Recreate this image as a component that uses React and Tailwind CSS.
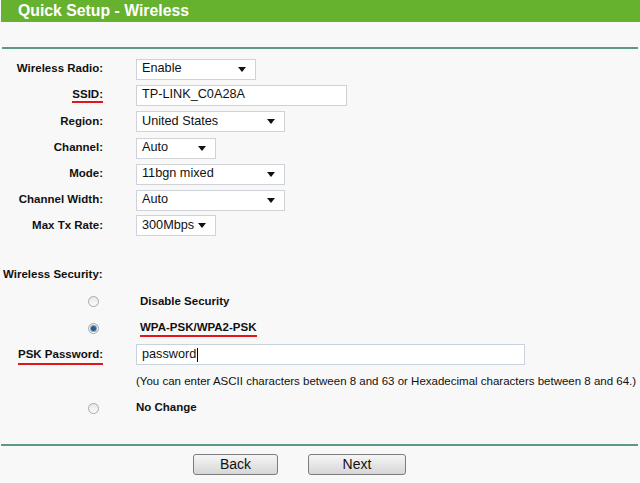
import React from "react";

function Arrow() {
  return (
    <svg width="8" height="5" viewBox="0 0 8 5" className="shrink-0">
      <path d="M0 0 L8 0 L4 5 Z" fill="#111" />
    </svg>
  );
}

function Select({ value, width }) {
  return (
    <div
      className="flex h-[21px] items-center justify-between border border-[#cfd3d8] bg-white pl-[5px] pr-[9px] text-[12.7px] text-[#111]"
      style={{ width }}
    >
      <span>{value}</span>
      <Arrow />
    </div>
  );
}

function TextBox({ value, width, caret }) {
  return (
    <div
      className="flex h-[21px] items-center border border-[#c9d3de] bg-white pl-[5px] text-[12.7px] text-[#111]"
      style={{ width }}
    >
      <span>{value}</span>
      {caret && <span className="ml-[1px] inline-block h-[14px] w-px bg-black" />}
    </div>
  );
}

function Radio({ checked }) {
  return (
    <div className="flex h-[11px] w-[11px] items-center justify-center rounded-full border border-[#a8a8a8] bg-gradient-to-b from-[#e8e8e8] to-[#fbfbfb]">
      {checked && (
        <div className="h-[5px] w-[5px] rounded-full bg-[#2b5c86] ring-1 ring-[#7fa3c4]" />
      )}
    </div>
  );
}

function Row({ label, underline, children, h = "h-[26px]" }) {
  return (
    <div className={`flex ${h} items-center`}>
      <div className="w-[103px] whitespace-nowrap text-right text-[11.5px] font-bold text-[#111]">
        {underline ? (
          <span className="border-b-2 border-[#e0161b] pb-[1px]">{label}</span>
        ) : (
          label
        )}
      </div>
      <div className="ml-[33px]">{children}</div>
    </div>
  );
}

function Button({ children, width }) {
  return (
    <button
      className="flex h-[21px] items-center justify-center rounded-[3px] border border-[#7c7c7c] bg-gradient-to-b from-[#f6f6f6] to-[#d6d6d6] text-[14px] text-[#111]"
      style={{ width }}
    >
      {children}
    </button>
  );
}

export default function App() {
  return (
    <div className="h-[483px] w-[640px] overflow-hidden bg-[#f8f8f8] font-['Liberation_Sans',Arial,sans-serif]">
      <div className="ml-[1px] flex h-[22px] items-center bg-[#66b22f] pl-[17px] text-[15.8px] font-bold text-white">
        Quick Setup - Wireless
      </div>

      <div className="ml-[2px] mr-[2px] mt-[25px] h-[2px] bg-[#5e9985]" />

      <div className="mt-[7px] flex flex-col">
        <Row label="Wireless Radio:">
          <Select value="Enable" width={120} />
        </Row>
        <Row label="SSID:" underline>
          <TextBox value="TP-LINK_C0A28A" width={211} />
        </Row>
        <Row label="Region:" h="h-[27px]">
          <Select value="United States" width={149} />
        </Row>
        <Row label="Channel:">
          <Select value="Auto" width={80} />
        </Row>
        <Row label="Mode:">
          <Select value="11bgn mixed" width={149} />
        </Row>
        <Row label="Channel Width:">
          <Select value="Auto" width={149} />
        </Row>
        <Row label="Max Tx Rate:" h="h-[25px]">
          <Select value="300Mbps" width={80} />
        </Row>
      </div>

      <div className="mt-[24px] flex h-[26px] items-center pl-[3px] text-[11.5px] font-bold text-[#111]">
        Wireless Security:
      </div>

      <div className="flex flex-col">
        <div className="flex h-[27px] items-center">
          <div className="ml-[88px]">
            <Radio />
          </div>
          <div className="ml-[41px] text-[11.5px] font-bold text-[#111]">Disable Security</div>
        </div>
        <div className="flex h-[26px] items-center">
          <div className="ml-[88px]">
            <Radio checked />
          </div>
          <div className="ml-[41px] text-[11.5px] font-bold text-[#111]">
            <span className="border-b-2 border-[#e0161b] pb-[2px]">WPA-PSK/WPA2-PSK</span>
          </div>
        </div>
        <div className="flex h-[27px] items-center">
          <div className="w-[103px] text-right text-[11.5px] font-bold text-[#111]">
            <span className="border-b-2 border-[#e0161b] pb-[3px]">PSK Password:</span>
          </div>
          <div className="ml-[33px]">
            <TextBox value="password" width={389} caret />
          </div>
        </div>
        <div className="flex h-[27px] items-center whitespace-nowrap pl-[136px] text-[11.5px] text-[#111]">
          (You can enter ASCII characters between 8 and 63 or Hexadecimal characters between 8 and 64.)
        </div>
        <div className="flex h-[26px] items-center">
          <div className="ml-[88px]">
            <Radio />
          </div>
          <div className="ml-[37px] text-[11.5px] font-bold text-[#111]">No Change</div>
        </div>
      </div>

      <div className="ml-[1px] mr-[2px] mt-[23px] h-[2px] bg-[#5e9985]" />

      <div className="mt-[8px] flex pl-[193px]">
        <Button width={85}>Back</Button>
        <div className="ml-[30px]">
          <Button width={98}>Next</Button>
        </div>
      </div>
    </div>
  );
}
